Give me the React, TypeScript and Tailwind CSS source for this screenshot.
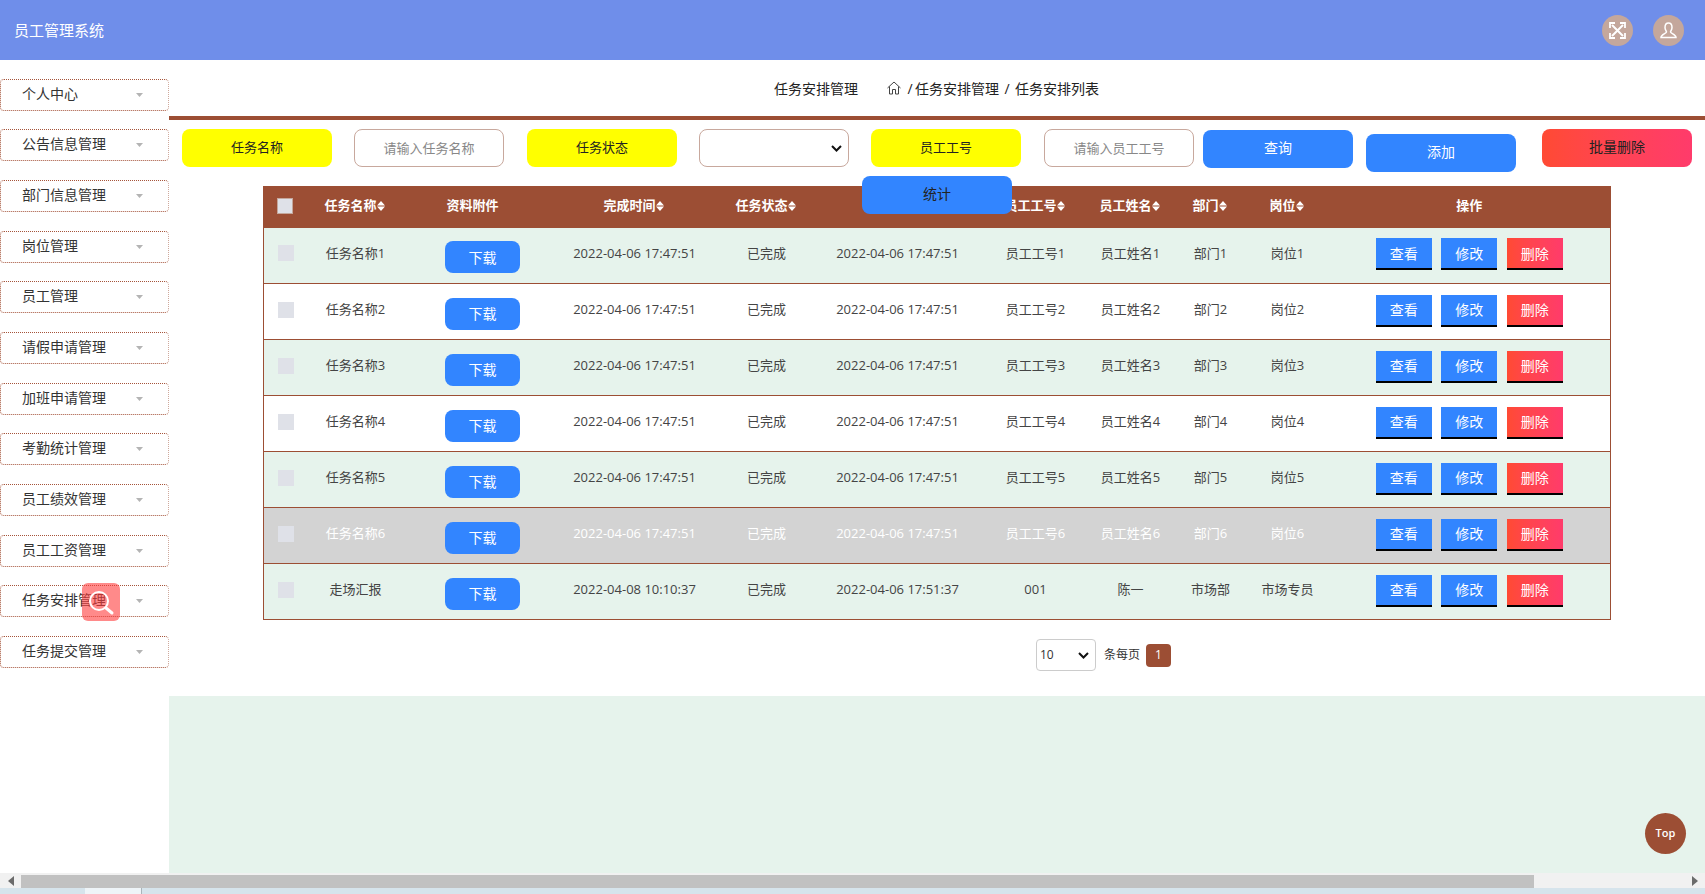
import { useState } from "react";

const FONT = { fontFamily: '"Open Sans","Noto Sans CJK SC",sans-serif' };

const menus = [
  "个人中心",
  "公告信息管理",
  "部门信息管理",
  "岗位管理",
  "员工管理",
  "请假申请管理",
  "加班申请管理",
  "考勤统计管理",
  "员工绩效管理",
  "员工工资管理",
  "任务安排管理",
  "任务提交管理",
];

const rows = [1, 2, 3, 4, 5, 6]
  .map((n) => ({
    name: `任务名称${n}`,
    done: "2022-04-06 17:47:51",
    start: "2022-04-06 17:47:51",
    no: `员工工号${n}`,
    emp: `员工姓名${n}`,
    dept: `部门${n}`,
    post: `岗位${n}`,
  }))
  .concat({
    name: "走场汇报",
    done: "2022-04-08 10:10:37",
    start: "2022-04-06 17:51:37",
    no: "001",
    emp: "陈一",
    dept: "市场部",
    post: "市场专员",
  });

function SortArrows() {
  return (
    <svg width="8" height="10" viewBox="0 0 8 10" className="inline-block align-[-1px]">
      <path d="M4 0 L8 4.5 H0 Z M0 5.5 H8 L4 10 Z" fill="#fff" />
    </svg>
  );
}

function Chevron({ className }: { className: string }) {
  return (
    <svg width="11" height="7" viewBox="0 0 11 7" fill="none" stroke="#111" strokeWidth="2" className={`absolute pointer-events-none ${className}`}>
      <path d="M1 1 L5.5 5.5 L10 1" />
    </svg>
  );
}

function Th({ label, sort = true }: { label: string; sort?: boolean }) {
  return (
    <th className="font-bold text-[13px] text-white text-center whitespace-nowrap pb-[4px]">
      {label}
      {sort && <SortArrows />}
    </th>
  );
}

function SideItem({ label }: { label: string }) {
  return (
    <div className="h-[32px] flex items-center justify-between pl-[21px] pr-[25px] pb-[3px] rounded-[4px] border-y border-l border-dotted border-y-[#a5543a] border-l-[#a5543a] border-r border-r-[#cfa99c] border-r-solid text-[14px] text-[#333]">
      <span>{label}</span>
      <svg width="7" height="4" viewBox="0 0 7 4" className="mt-[3px]">
        <path d="M0 0 H7 L3.5 4 Z" fill="#b4b4b4" />
      </svg>
    </div>
  );
}

export default function App() {
  const [name, setName] = useState("");
  const [no, setNo] = useState("");

  const yellowBtn = "w-[150px] h-[38px] rounded-[8px] bg-[#ffff00] text-[13px] text-[#222] pb-[1px] flex items-center justify-center";
  const blueBtn = "w-[150px] h-[38px] rounded-[8px] bg-[#3285ff] text-[14px] pb-[4px] flex items-center justify-center";
  const inputCls = "w-[150px] h-[38px] rounded-[8px] border border-[#c8a89d] bg-white text-center text-[13px] outline-none placeholder:text-[#888]";
  const opBtn = "w-[56px] h-[32px] border-b-2 border-black text-white text-[14px] flex items-center justify-center";
  const cell = "text-center pl-[2px] pb-[4px] whitespace-nowrap";

  return (
    <div className="w-[1705px] h-[894px] overflow-hidden relative flex flex-col bg-white" style={FONT}>
      <header className="h-[60px] shrink-0 bg-[#6f8eea] flex items-center justify-between pl-[14px] pr-[21px]">
        <span className="text-[15px] text-white">员工管理系统</span>
        <div className="flex items-center gap-[20px]">
          <div className="w-[31px] h-[31px] rounded-full bg-[#c4a79c] flex items-center justify-center">
            <svg width="17" height="17" viewBox="0 0 17 17" fill="none" stroke="#fff" strokeWidth="2">
              <path d="M3 3 L14 14 M14 3 L3 14" />
              <path d="M1 6 V1 H6 M11 1 H16 V6 M16 11 V16 H11 M6 16 H1 V11" strokeWidth="1.8" />
            </svg>
          </div>
          <div className="w-[31px] h-[31px] rounded-full bg-[#c4a79c] flex items-center justify-center">
            <svg width="17" height="17" viewBox="0 0 17 17" fill="none" stroke="#fff" strokeWidth="1.5">
              <path d="M8.5 1 C6 1 5 3 5 5.5 C5 8 6.5 9 6.5 10 C6.5 11.5 1 12 1 15.5 H16 C16 12 10.5 11.5 10.5 10 C10.5 9 12 8 12 5.5 C12 3 11 1 8.5 1 Z" />
            </svg>
          </div>
        </div>
      </header>

      <div className="h-[813px] shrink-0 flex">
        <aside className="w-[169px] shrink-0 pt-[18.6px] flex flex-col gap-[18.67px] bg-white">
          {menus.map((m) => (
            <SideItem key={m} label={m} />
          ))}
        </aside>

        <main className="flex-1 flex flex-col bg-[#e6f3ec]">
          <div className="h-[636px] shrink-0 bg-white relative">
            <div className="h-[56px] flex items-center pl-[605px] text-[14px] text-[#222]">
              <span>任务安排管理</span>
              <svg width="14" height="14" viewBox="0 0 14 14" fill="none" stroke="#444" strokeWidth="1" className="ml-[29px] mr-[4px]">
                <path d="M0.5 7 L7 1 L13.5 7 M2.5 5.5 V13 H5.5 V8.5 H8.5 V13 H11.5 V5.5" />
              </svg>
              <span className="w-[10px] text-center">/</span>
              <span>任务安排管理</span>
              <span className="w-[16px] text-center">/</span>
              <span>任务安排列表</span>
            </div>
            <div className="h-[4px] bg-[#9c4e34]" />

            <div className="h-[66px] pt-[9px] pl-[13px] flex items-start">
              <div className={yellowBtn}>任务名称</div>
              <input
                className={`${inputCls} ml-[22px]`}
                placeholder="请输入任务名称"
                value={name}
                onChange={(e) => setName(e.target.value)}
              />
              <div className={`${yellowBtn} ml-[23px]`}>任务状态</div>
              <div className="relative ml-[22px]">
                <select className="block w-[150px] h-[38px] appearance-none rounded-[8px] border border-[#c8a89d] bg-white text-[13px]">
                  <option></option>
                </select>
                <Chevron className="left-[132px] top-[16px]" />
              </div>
              <div className={`${yellowBtn} ml-[22px]`}>员工工号</div>
              <input
                className={`${inputCls} ml-[23px]`}
                placeholder="请输入员工工号"
                value={no}
                onChange={(e) => setNo(e.target.value)}
              />
              <button className={`${blueBtn} ml-[9px] mt-[1px] text-white`}>查询</button>
              <button className={`${blueBtn} ml-[13px] mt-[5px] text-white`}>添加</button>
              <button className="w-[150px] h-[38px] ml-[26px] pb-[4px] rounded-[8px] bg-gradient-to-r from-[#ff4a33] to-[#ff3b6b] text-[14px] text-[#222]">
                批量删除
              </button>
            </div>

            {/* sits over the table header in the original too */}
            <button className={`${blueBtn} absolute left-[693px] top-[116px] z-10 text-[#222]`}>统计</button>

            <div className="pl-[94px]">
              <table className="w-[1347px] table-fixed border-collapse border border-[#9c4e34] text-[13px] text-[#444]">
                <colgroup>
                  <col className="w-[27px]" />
                  <col className="w-[128px]" />
                  <col className="w-[126px]" />
                  <col className="w-[178px]" />
                  <col className="w-[86px]" />
                  <col className="w-[176px]" />
                  <col className="w-[100px]" />
                  <col className="w-[90px]" />
                  <col className="w-[70px]" />
                  <col className="w-[84px]" />
                  <col className="w-[282px]" />
                </colgroup>
                <thead>
                  <tr className="h-[41px] bg-[#9c4e34]">
                    <th className="text-left pb-[2px]">
                      <input type="checkbox" className="block appearance-none ml-[13px] w-[16px] h-[16px] bg-[#dfe1e8] border border-[#c4a79c]" />
                    </th>
                    <Th label="任务名称" />
                    <th className="font-bold text-[13px] text-white text-center pr-[18px] pb-[4px]">资料附件</th>
                    <Th label="完成时间" />
                    <Th label="任务状态" />
                    <Th label="发布时间" />
                    <Th label="员工工号" />
                    <Th label="员工姓名" />
                    <Th label="部门" />
                    <Th label="岗位" />
                    <Th label="操作" sort={false} />
                  </tr>
                </thead>
                <tbody>
                  {rows.map((r, i) => {
                    const hovered = i === 5;
                    const rowCls = hovered
                      ? "bg-[#d3d3d3] text-white"
                      : i % 2 === 0
                        ? "bg-[#e6f3ec]"
                        : "bg-white";
                    return (
                      <tr key={r.name} className={`h-[56px] border-b border-[#9c4e34] ${rowCls}`}>
                        <td className="pb-[4px]">
                          <input type="checkbox" className="block appearance-none ml-[14px] w-[16px] h-[16px] bg-[#dfe1e8]" />
                        </td>
                        <td className={cell}>{r.name}</td>
                        <td className="pt-[4px] pl-[2px]">
                          <button className="block mx-auto w-[75px] h-[32px] rounded-[8px] bg-[#3285ff] text-white text-[14px]">
                            下载
                          </button>
                        </td>
                        <td className={cell}>{r.done}</td>
                        <td className={cell}>已完成</td>
                        <td className={cell}>{r.start}</td>
                        <td className={cell}>{r.no}</td>
                        <td className={cell}>{r.emp}</td>
                        <td className={cell}>{r.dept}</td>
                        <td className={cell}>{r.post}</td>
                        <td className="pb-[2px]">
                          <div className="flex justify-center gap-[9.5px]">
                            <button className={`${opBtn} bg-[#3285ff]`}>查看</button>
                            <button className={`${opBtn} bg-[#3285ff]`}>修改</button>
                            <button className={`${opBtn} bg-gradient-to-r from-[#ff4a33] to-[#ff3b6b]`}>删除</button>
                          </div>
                        </td>
                      </tr>
                    );
                  })}
                </tbody>
              </table>
            </div>

            <div className="pl-[867px] pt-[19px] flex items-center text-[12px] text-[#333]">
              <div className="relative">
                <select className="block w-[60px] h-[32px] appearance-none rounded-[4px] border border-[#ccc] bg-white pl-[3px] text-[12px] text-[#333]">
                  <option>10</option>
                </select>
                <Chevron className="left-[42px] top-[13px]" />
              </div>
              <span className="ml-[8px]">条每页</span>
              <span className="ml-[6px] w-[25px] h-[23px] rounded-[4px] bg-[#9c4e34] text-white flex items-center justify-center">
                1
              </span>
            </div>
          </div>
        </main>
      </div>

      <div className="h-[15px] shrink-0 bg-[#f1f1f1] relative">
        <div className="absolute left-[21px] top-[2px] h-[13px] w-[1513px] bg-[#c1c1c1]" />
        <svg width="6" height="10" viewBox="0 0 6 10" className="absolute left-[8px] top-[3px]">
          <path d="M6 0 V10 L0 5 Z" fill="#6b6b6b" />
        </svg>
        <svg width="6" height="10" viewBox="0 0 6 10" className="absolute left-[1692px] top-[3px]">
          <path d="M0 0 V10 L6 5 Z" fill="#6b6b6b" />
        </svg>
      </div>
      <div className="h-[6px] shrink-0 flex bg-[#d6e4ec]">
        <div className="w-[85px]" />
        <div className="w-[56px] bg-[#eef4f8]" />
        <div className="w-[1px] bg-[#a9b4ba]" />
      </div>

      <div className="absolute left-[82px] top-[583px] w-[38px] h-[38px] rounded-[6px] bg-[#ff3c3c]/60 flex items-center justify-center">
        <svg width="38" height="38" viewBox="0 0 38 38" fill="none" stroke="#fff">
          <circle cx="17" cy="18" r="9" strokeWidth="2" />
          <path d="M24 25 L30 30" strokeWidth="3" strokeLinecap="round" />
        </svg>
      </div>

      <div className="absolute left-[1645px] top-[813px] w-[41px] h-[41px] rounded-full bg-[#9c4e34] text-white text-[11px] font-semibold flex items-center justify-center">
        Top
      </div>
    </div>
  );
}
